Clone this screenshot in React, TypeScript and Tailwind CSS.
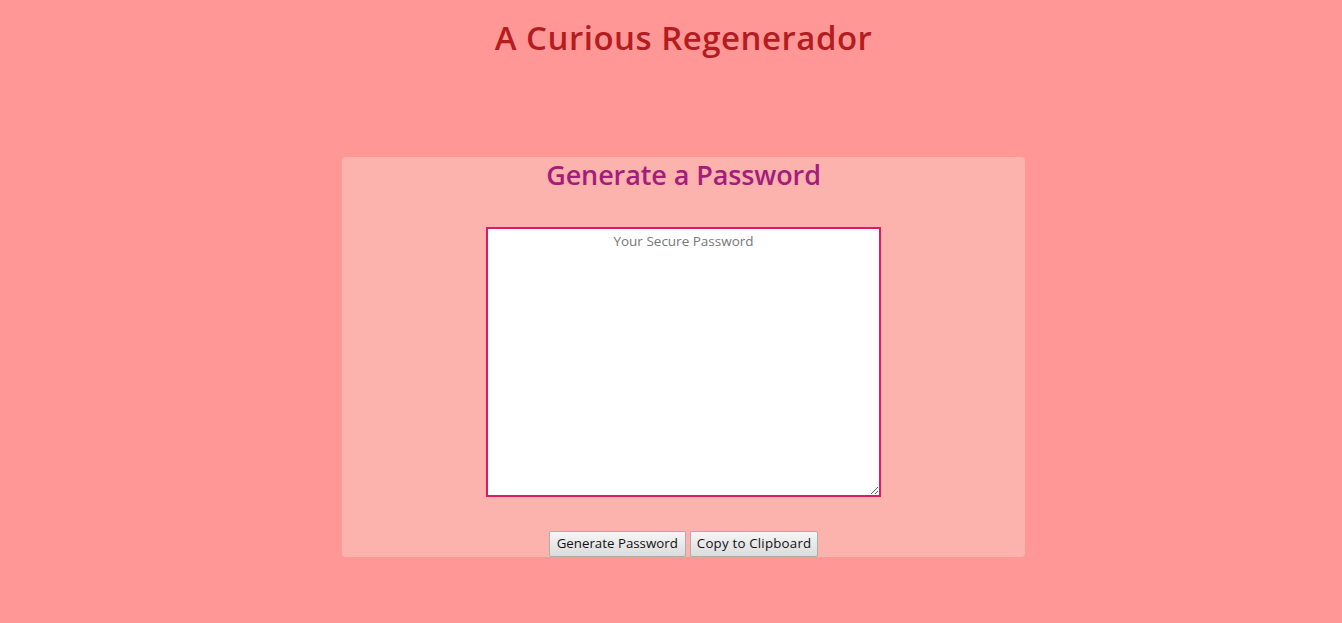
export default function App() {
  return (
    <div
      className="min-h-[623px] bg-[#ff9797] pl-[25px] pt-[14px]"
      style={{ fontFamily: '"Open Sans", "Noto Sans", sans-serif' }}
    >
      <h1 className="text-center text-[33px] font-semibold leading-[48px] tracking-[0.5px] text-[#b41c1f]">
        A Curious Regenerador
      </h1>

      <div className="mx-auto mt-[95px] flex h-[400px] w-[683px] flex-col items-center rounded-[4px] bg-[#fcb3ad]">
        <h2 className="-mt-[1px] text-[27px] font-semibold leading-[38px] tracking-[-0.1px] text-[#a51d7c]">
          Generate a Password
        </h2>

        <textarea
          readOnly
          placeholder="Your Secure Password"
          className="mt-[33px] h-[270px] w-[395px] border-2 border-[#dc1b63] bg-white px-2 pt-[2px] text-center text-[13.5px] text-[#333] outline-none placeholder:text-[#777]"
        />

        <div className="mt-[34px] flex gap-[4px]">
          <button className="h-[26px] rounded-[2px] border border-[#adadad] bg-gradient-to-b from-[#f6f6f6] to-[#dcdcdc] px-[7px] text-[13.3px] text-[#111]">
            Generate Password
          </button>
          <button className="h-[26px] rounded-[2px] border border-[#adadad] bg-gradient-to-b from-[#f6f6f6] to-[#dcdcdc] px-[6px] text-[13.3px] tracking-[0.2px] text-[#111]">
            Copy to Clipboard
          </button>
        </div>
      </div>
    </div>
  );
}
